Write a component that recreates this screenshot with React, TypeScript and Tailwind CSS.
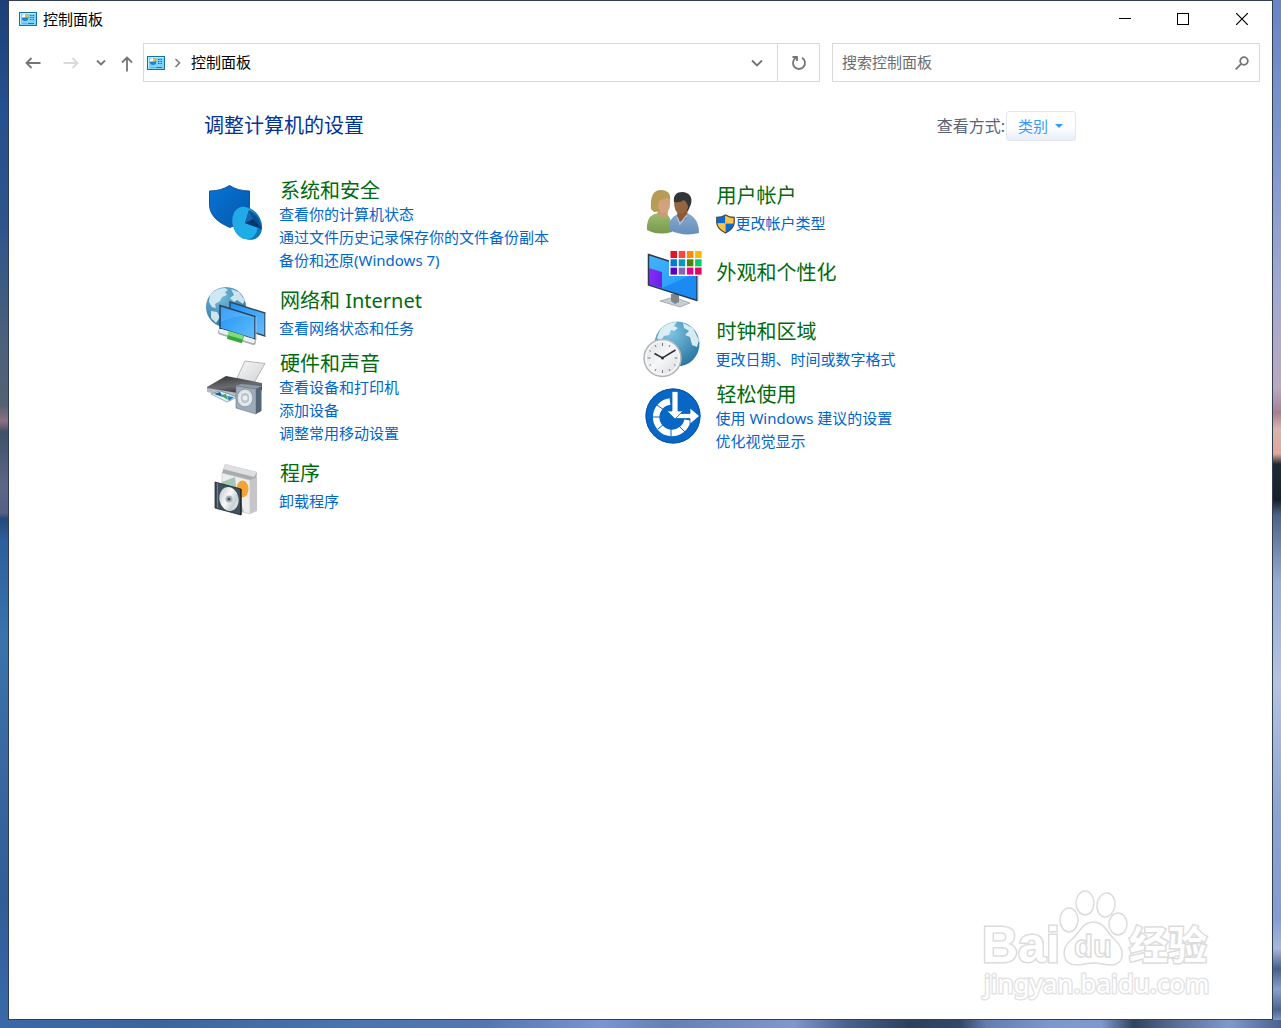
import React from 'react';

type Category = {
    title: string;
    links: string[];
    icon: React.ReactNode;
    shield?: boolean;
};

const ControlPanelIcon = () => (
    <svg className="shrink-0" width="18" height="14" viewBox="0 0 18 14" aria-hidden="true">
        <rect x="0.5" y="0.5" width="17" height="13" fill="#7fd2fa" stroke="#1272a8" />
        <path d="M1.5 12.5V1.5H16.5" fill="none" stroke="#c5ecfd" />
        <circle cx="6" cy="5.5" r="3.4" fill="#1b86cf" />
        <path d="M6 5.5H2.6A3.4 3.4 0 0 1 6 2.1Z" fill="#fff" />
        <path d="M6 5.5V2A3.5 3.5 0 0 1 9.5 5.5Z" fill="#ffb52e" />
        <path d="M11 3.5h1.5M11 5.5h1.5M11 7.5h1.5M13.5 3.5H15M13.5 5.5H15M13.5 7.5H15" stroke="#146fae" />
        <path d="M3 11.5h5" stroke="#f0951c" />
        <path d="M9 11.5h6" stroke="#1579c4" />
    </svg>
);

const UacShield = () => (
    <svg className="shrink-0" width="19" height="20" viewBox="0 0 19 20" aria-hidden="true">
        <clipPath id="uac">
            <path d="M0.8 3.5Q6 3.5 9.5 1Q13 3.5 18.2 3.5V9Q17.5 15 9.5 19Q1.5 15 0.8 9Z" />
        </clipPath>
        <g clipPath="url(#uac)">
            <rect width="9.5" height="9.5" fill="#0b6bd0" />
            <rect x="9.5" width="9.5" height="9.5" fill="#ffc444" />
            <rect y="9.5" width="9.5" height="11" fill="#ffc444" />
            <rect x="9.5" y="9.5" width="9.5" height="11" fill="#0b6bd0" />
        </g>
        <path d="M0.8 3.5Q6 3.5 9.5 1Q13 3.5 18.2 3.5V9Q17.5 15 9.5 19Q1.5 15 0.8 9Z" fill="none" stroke="#4a4a48" strokeWidth="1.3" />
    </svg>
);

const CategoryIcon = ({ children }: { children: React.ReactNode }) => (
    <svg className="-mb-3 h-[66px] w-16 shrink-0" viewBox="0 0 64 66" aria-hidden="true">
        {children}
    </svg>
);

const SecurityIcon = () => (
    <CategoryIcon>
        <defs>
            <linearGradient id="shieldFill" x1="0" y1="0" x2="1" y2="1">
                <stop offset="0" stopColor="#0873d4" />
                <stop offset="1" stopColor="#0458ae" />
            </linearGradient>
            <linearGradient id="pieFill" x1="0" y1="0" x2="1" y2="1">
                <stop offset="0" stopColor="#22a7e4" />
                <stop offset="1" stopColor="#1cb0ea" />
            </linearGradient>
        </defs>
        <path d="M6.5 14Q18 14 26.5 8.5Q35 14 46.5 14V29C46.5 39 38 46 27 50.5C14 45 6.5 38 6.5 27Z" fill="url(#shieldFill)" stroke="#0a57a3" />
        <path d="M36 30C46 27 59 37 59 50C59 60 51 65 43 62L34 57Z" fill="#0b78ba" />
        <ellipse cx="42" cy="46" rx="12.5" ry="16.5" transform="rotate(-14 42 46)" fill="url(#pieFill)" />
        <path d="M42 46L46 33Q56 38 59 52Z" fill="#0a4d91" />
        <path d="M42 46L50 42L59 52Z" fill="#06376f" />
        <path d="M42 46L46 33L50 42Z" fill="#1565ae" />
    </CategoryIcon>
);

const NetworkIcon = () => (
    <CategoryIcon>
        <defs>
            <radialGradient id="netGlobe" cx="0.35" cy="0.25" r="0.8">
                <stop offset="0" stopColor="#79bde0" />
                <stop offset="1" stopColor="#256f9f" />
            </radialGradient>
            <linearGradient id="netScreen" x1="0" y1="0" x2="1" y2="1">
                <stop offset="0" stopColor="#1c92f4" />
                <stop offset="1" stopColor="#63bdff" />
            </linearGradient>
        </defs>
        <circle cx="23" cy="25" r="20" fill="url(#netGlobe)" />
        <path d="M7 13Q13 6 22 6L25 8L22 10L24 13L19 15L17 19L12 22L13 26L9 25L6 20ZM28 7L36 10L42 18L40 22L34 18L31 20L27 16L31 13ZM8 29L14 30L17 35L13 41L8 36Z" fill="#d9edf5" opacity="0.9" />
        <path d="M27 20L62 31V54L27 43Z" fill="url(#netScreen)" stroke="#36495a" strokeWidth="1.5" />
        <path d="M62.5 31.5V54.5" stroke="#b7c4cc" />
        <path d="M17 23.5L52 34.5V57.5L17 46.5Z" fill="url(#netScreen)" stroke="#29435a" strokeWidth="1.5" />
        <path d="M18 40Q35 31 51 36L51 35L18 25Z" fill="#fff" opacity="0.12" />
        <path d="M53 35V58" stroke="#b7c4cc" />
        <path d="M18 50L50 60" stroke="#a9b3b3" strokeWidth="6" strokeLinecap="round" />
        <path d="M18 49L50 59" stroke="#edf0f0" strokeWidth="4" strokeLinecap="round" />
        <path d="M25 53L40 57.5" stroke="#35a83c" strokeWidth="8" />
        <path d="M25 51L40 55.5" stroke="#7ddd79" strokeWidth="4" />
    </CategoryIcon>
);

const HardwareIcon = () => (
    <CategoryIcon>
        <defs>
            <linearGradient id="printer" x1="0" y1="0" x2="0.3" y2="1">
                <stop offset="0" stopColor="#303235" />
                <stop offset="0.6" stopColor="#6a6c70" />
                <stop offset="1" stopColor="#2b2d30" />
            </linearGradient>
            <linearGradient id="paper" x1="0" y1="0" x2="1" y2="1">
                <stop offset="0" stopColor="#f7f7f7" />
                <stop offset="1" stopColor="#cfd1d3" />
            </linearGradient>
        </defs>
        <path d="M42 11L62 13.5L51 33L34 28Z" fill="url(#paper)" stroke="#b4b6b8" />
        <path d="M23 26L59 33V40L35 46L4 40V37Z" fill="url(#printer)" />
        <path d="M4 38L35 43V49L4 42Z" fill="#b7bbc0" />
        <path d="M8 44L17 41L34 47L24 52Z" fill="#e7f3fb" stroke="#5b7b94" strokeWidth="0.6" />
        <path d="M11 44L17 42L20 47Z" fill="#155aa6" />
        <path d="M17 45L23 44L25 50Z" fill="#48a463" />
        <path d="M24 46L31 47L26 51Z" fill="#2781c8" />
        <path d="M33 36L38 34L59 36L53 39Z" fill="#8b98a5" />
        <path d="M33 36L53 39V64L33 58Z" fill="#9eacba" stroke="#73818f" strokeWidth="0.7" />
        <path d="M53 39L58.5 37V61L53 64Z" fill="#536576" />
        <ellipse cx="42" cy="48" rx="8" ry="9" fill="#dce2e6" stroke="#8d9aa7" />
        <ellipse cx="42" cy="48" rx="5" ry="6" fill="#bcc5cd" stroke="#f8fafb" />
        <circle cx="42" cy="48" r="2.5" fill="#ecf0f2" />
    </CategoryIcon>
);

const ProgramsIcon = () => (
    <CategoryIcon>
        <defs>
            <linearGradient id="disc" x1="0" y1="0" x2="1" y2="1">
                <stop offset="0" stopColor="#b6bfc3" />
                <stop offset="0.45" stopColor="#fafafa" />
                <stop offset="0.7" stopColor="#c8d2d5" />
                <stop offset="1" stopColor="#f5f5f5" />
            </linearGradient>
        </defs>
        <path d="M19 18L22 9L54 17L53 26L47 28Z" fill="#a9abad" />
        <path d="M22 9L54 17L51 22L20 14Z" fill="#dedfe0" />
        <path d="M19 18L47 25V59L19 51Z" fill="#ededed" stroke="#c3c3c3" strokeWidth="0.6" />
        <path d="M47 25L54 22V56L47 59Z" fill="#c5c6c7" />
        <path d="M19 27L32 22L33 32L41 57L37 58L19 40Z" fill="#a4c8b3" />
        <ellipse cx="39.5" cy="34" rx="6" ry="8.5" fill="#f5a332" />
        <path d="M12 27L38 34V60L12 53Z" fill="#40505d" stroke="#1b242c" strokeWidth="0.8" />
        <path d="M14.5 28V53" stroke="#71808c" />
        <ellipse cx="26" cy="44" rx="9.5" ry="12" fill="url(#disc)" transform="rotate(-12 26 44)" />
        <circle cx="26" cy="44" r="3.5" fill="#aab3b7" />
        <circle cx="26" cy="44" r="1.5" fill="#3d5363" />
        <path d="M38 34V60" stroke="#15191c" />
    </CategoryIcon>
);

const UsersIcon = () => (
    <CategoryIcon>
        <defs>
            <linearGradient id="womanTop" x1="0" y1="0" x2="0" y2="1">
                <stop offset="0" stopColor="#a2bd71" />
                <stop offset="1" stopColor="#75994c" />
            </linearGradient>
            <linearGradient id="manTop" x1="0" y1="0" x2="0" y2="1">
                <stop offset="0" stopColor="#87abd0" />
                <stop offset="1" stopColor="#668eba" />
            </linearGradient>
        </defs>
        <path d="M7 53Q6 41 14 37L23 35Q32 37 32 55Q18 59 7 53Z" fill="url(#womanTop)" />
        <path d="M18 34H28L27 40Q22 41 17 37Z" fill="#c89b77" />
        <path d="M11 32C10 20 13 13 21 13C29 13 31 18 30 24L24 34L14 35Z" fill="#b59c57" />
        <path d="M19 24Q26 20 30 22Q31 33 26 36Q19 37 18 29Z" fill="#d3a27d" />
        <path d="M29 53Q28 42 36 38L47 36Q59 41 59 56Q44 60 29 53Z" fill="url(#manTop)" />
        <path d="M38 33H48L46 42L39 45L37 38Z" fill="#8b5a35" />
        <path d="M34 25C33 18 37 15 42 15C49 15 53 20 51 27L48 34L42 30Z" fill="#343536" />
        <path d="M34 25Q40 26 44 23Q48 26 48 31Q45 37 39 37Q34 34 34 25Z" fill="#946542" />
        <path d="M37 40L40 47L47 38" fill="none" stroke="#a5c1de" strokeWidth="1.5" />
    </CategoryIcon>
);

const swatches = [
    ['#e81123', '#ff4343', '#ff8c00', '#ffb900'],
    ['#0078d7', '#0099bc', '#498205', '#00cc6a'],
    ['#5b00c6', '#8764b8', '#e3008c', '#ea005e'],
];

const PersonalizeIcon = () => (
    <CategoryIcon>
        <defs>
            <linearGradient id="monitor" x1="0" y1="0" x2="1" y2="1">
                <stop offset="0" stopColor="#46b2fa" />
                <stop offset="1" stopColor="#1798f7" />
            </linearGradient>
            <linearGradient id="wave" x1="0" y1="0" x2="1" y2="0.3">
                <stop offset="0" stopColor="#8a2cff" />
                <stop offset="1" stopColor="#6a22ea" />
            </linearGradient>
        </defs>
        <g transform="translate(0 1)">
            <path d="M20 55L34 51L50 57L40 61Z" fill="#c7cdd1" stroke="#8f989f" strokeWidth="0.7" />
            <path d="M31 48H39V56L35 58L31 55Z" fill="#7c868e" />
            <path d="M8.5 8.5L57 24V54.5L8.5 39Z" fill="url(#monitor)" />
            <path d="M22 42L56 27V54Z" fill="#1b8af3" />
            <path d="M9 22L22 26V42L9 38.5Z" fill="url(#wave)" />
            <path d="M8.5 8.5L57 24V54.5L8.5 39Z" fill="none" stroke="#293b4b" strokeWidth="1.5" />
            <path d="M58 24V55" stroke="#b8c3ca" />
            <rect x="29" y="4" width="34" height="26" fill="#fff" />
            {swatches.map((row, y) =>
                row.map((color, x) => (
                    <rect key={color} x={30.5 + x * 8.2} y={5 + y * 8.3} width="6.5" height="7" fill={color} />
                ))
            )}
        </g>
    </CategoryIcon>
);

const ClockIcon = () => (
    <CategoryIcon>
        <defs>
            <radialGradient id="clockGlobe" cx="0.35" cy="0.25" r="0.8">
                <stop offset="0" stopColor="#7fc6e5" />
                <stop offset="1" stopColor="#28759f" />
            </radialGradient>
            <linearGradient id="clockFace" x1="0" y1="0" x2="1" y2="1">
                <stop offset="0" stopColor="#d9dce0" />
                <stop offset="0.5" stopColor="#f7f7f8" />
                <stop offset="1" stopColor="#d5d6d9" />
            </linearGradient>
        </defs>
        <g transform="translate(0 -1)">
            <circle cx="37" cy="32" r="22.5" fill="url(#clockGlobe)" />
            <path d="M20 18Q27 10 37 10L34 14L38 16L34 19L31 18L29 23L24 24L21 29L17 26ZM43 11L53 16L59 28L57 35L52 33L50 25L45 23L49 19L44 16Z" fill="#e4f2f7" opacity="0.92" />
            <circle cx="22.5" cy="46" r="18.5" fill="url(#clockFace)" stroke="#b2b5ba" strokeWidth="1.5" />
            <circle cx="22.5" cy="46" r="16.5" fill="none" stroke="#f7f7f7" strokeWidth="1.5" />
            <path d="M22.5 31V34M22.5 58V61M7.5 46H10.5M34.5 46H37.5M15 33L16 35M30 33L29 35M9.5 38.5L11 39.5M9.5 53.5L11 52.5M15 59L16 57M30 59L29 57M35.5 53.5L34 52.5" stroke="#777c82" />
            <path d="M14.5 41.5L22.5 46L35.5 38" fill="none" stroke="#2b3035" strokeWidth="1.5" />
            <circle cx="22.5" cy="46" r="1.5" fill="#2b3035" />
        </g>
    </CategoryIcon>
);

const EaseIcon = () => (
    <CategoryIcon>
        <g transform="translate(0 -4)">
            <circle cx="33" cy="39" r="27.5" fill="#0867c4" />
            <circle cx="33" cy="39" r="27" fill="none" stroke="#0654a6" />
            <path d="M30 24.5A15.8 15.8 0 1 0 47.5 43" fill="none" stroke="#fff" strokeWidth="6.5" />
            <path d="M12 40H20M17 28L24 33M18 52L24 47M31 60V52M45 55L39 49" stroke="#0867c4" strokeWidth="1" />
            <path d="M34.5 36.5H50V31L59.5 39L50 47V41.5H34.5Z" fill="#fff" stroke="#0867c4" strokeWidth="0.8" />
            <path d="M32 14.5H38V34H43L35 42L27 34H32Z" fill="#fff" stroke="#0867c4" strokeWidth="0.8" />
        </g>
    </CategoryIcon>
);

const leftCategories: Category[] = [
    {
        title: '系统和安全',
        links: ['查看你的计算机状态', '通过文件历史记录保存你的文件备份副本', '备份和还原(Windows 7)'],
        icon: <SecurityIcon />,
    },
    { title: '网络和 Internet', links: ['查看网络状态和任务'], icon: <NetworkIcon /> },
    {
        title: '硬件和声音',
        links: ['查看设备和打印机', '添加设备', '调整常用移动设置'],
        icon: <HardwareIcon />,
    },
    { title: '程序', links: ['卸载程序'], icon: <ProgramsIcon /> },
];

const rightCategories: Category[] = [
    { title: '用户帐户', links: ['更改帐户类型'], icon: <UsersIcon />, shield: true },
    { title: '外观和个性化', links: [], icon: <PersonalizeIcon /> },
    { title: '时钟和区域', links: ['更改日期、时间或数字格式'], icon: <ClockIcon /> },
    { title: '轻松使用', links: ['使用 Windows 建议的设置', '优化视觉显示'], icon: <EaseIcon /> },
];

const CategoryItem = ({ category }: { category: Category }) => {
    const { title, links, icon, shield } = category;
    const single = links.length === 1;

    return (
        <section className="flex gap-3">
            {icon}
            <div className={links.length === 0 ? 'pt-3.5 pb-[18px]' : single ? 'pt-[5px]' : ''}>
                <h2 className="pt-0.5 pl-px text-[20px] leading-[24px] text-[#006b0d]">
                    <a href="#" className="hover:underline">{title}</a>
                </h2>
                <ul className={single ? 'mt-1' : ''}>
                    {links.map((link) => (
                        <li key={link} className="text-[15px] leading-[23px] text-[#0066cc]">
                            <a href="#" className="flex items-center gap-px hover:underline">
                                {shield && <UacShield />}
                                {link}
                            </a>
                        </li>
                    ))}
                </ul>
            </div>
        </section>
    );
};

const TitleBar = () => (
    <header className="flex h-9 items-center pl-2.5">
        <ControlPanelIcon />
        <h1 className="ml-1.5 flex-1 text-[15px] text-black">控制面板</h1>
        <button aria-label="最小化" className="flex h-full w-[58px] items-center justify-center">
            <svg width="12" height="12" viewBox="0 0 12 12"><path d="M0 5.5H12" stroke="#000" /></svg>
        </button>
        <button aria-label="最大化" className="flex h-full w-[58px] items-center justify-center">
            <svg width="12" height="12" viewBox="0 0 12 12"><rect x="0.5" y="0.5" width="11" height="11" fill="none" stroke="#000" /></svg>
        </button>
        <button aria-label="关闭" className="flex h-full w-[60px] items-center justify-center">
            <svg width="12" height="12" viewBox="0 0 12 12"><path d="M0 0L12 12M12 0L0 12" stroke="#000" strokeWidth="1.2" /></svg>
        </button>
    </header>
);

const Toolbar = () => (
    <div className="mt-1.5 flex h-[39px] pr-3 pl-3">
        <button aria-label="后退" className="flex w-6 items-center justify-center">
            <svg width="16" height="12" viewBox="0 0 16 12" fill="none" stroke="#757575" strokeWidth="1.8"><path d="M15.5 6H1.5M6.5 1L1.5 6L6.5 11" /></svg>
        </button>
        <button aria-label="前进" disabled className="ml-3.5 flex w-6 items-center justify-center">
            <svg width="16" height="12" viewBox="0 0 16 12" fill="none" stroke="#dadada" strokeWidth="1.8"><path d="M0.5 6H14.5M9.5 1L14.5 6L9.5 11" /></svg>
        </button>
        <button aria-label="最近浏览的位置" className="ml-2.5 flex w-4 items-center justify-center">
            <svg width="10" height="6" viewBox="0 0 10 6" fill="none" stroke="#757575" strokeWidth="1.8"><path d="M1 0.5L5 4.5L9 0.5" /></svg>
        </button>
        <button aria-label="上移" className="ml-1.5 flex w-6 items-center justify-center pt-0.5">
            <svg width="12" height="16" viewBox="0 0 12 16" fill="none" stroke="#757575" strokeWidth="1.8"><path d="M6 15.5V1.5M1 6.5L6 1.5L11 6.5" /></svg>
        </button>

        <nav aria-label="地址" className="ml-1 flex min-w-0 flex-1 items-center border border-[#d9d9d9] pl-[3px]">
            <ControlPanelIcon />
            <svg className="ml-2.5" width="6" height="10" viewBox="0 0 6 10" fill="none" stroke="#757575" strokeWidth="1.5"><path d="M0.5 1L4.5 5L0.5 9" /></svg>
            <a href="#" className="ml-2.5 flex-1 text-[15px] text-black">控制面板</a>
            <button aria-label="以前的位置" className="flex h-full w-10 items-center justify-center">
                <svg width="12" height="8" viewBox="0 0 12 8" fill="none" stroke="#757575" strokeWidth="1.8"><path d="M1 1.5L6 6.5L11 1.5" /></svg>
            </button>
            <button aria-label="刷新" className="flex h-full w-[42px] items-center justify-center border-l border-[#d9d9d9]">
                <svg width="16" height="16" viewBox="0 0 16 16" fill="none" stroke="#757575" strokeWidth="1.8"><path d="M11 2.8A6 6 0 1 1 5 2.8M1.5 2H6V6" /></svg>
            </button>
        </nav>

        <label className="ml-3 flex w-[428px] items-center border border-[#d9d9d9] pr-2.5 pl-[9px]">
            <input
                type="search"
                aria-label="搜索控制面板"
                placeholder="搜索控制面板"
                className="min-w-0 flex-1 text-[15px] text-black outline-none placeholder:text-[#6d6d6d]"
            />
            <svg width="14" height="14" viewBox="0 0 14 14" fill="none" stroke="#757575" strokeWidth="1.8"><circle cx="9" cy="5" r="3.8" /><path d="M6.2 7.8L0.7 13.3" /></svg>
        </label>
    </div>
);

const Watermark = () => (
    <svg
        className="pointer-events-none absolute right-[58px] bottom-2 h-[130px] w-[236px]"
        viewBox="0 0 236 130"
        fill="#fff"
        stroke="#dcdcdc"
        strokeWidth="1.5"
        aria-hidden="true"
    >
        <g fontFamily="Liberation Sans, Arial, sans-serif" fontWeight="700" strokeWidth="3" paintOrder="stroke">
            <text x="4" y="81" fontSize="50">Bai</text>
            <text x="151" y="78" fontSize="39" fontFamily="Noto Sans CJK SC, sans-serif">经验</text>
        </g>
        <ellipse cx="91" cy="39" rx="9" ry="12" />
        <ellipse cx="107" cy="22" rx="9" ry="12" />
        <ellipse cx="128" cy="24" rx="9" ry="12" transform="rotate(8 128 24)" />
        <ellipse cx="140" cy="43" rx="9" ry="11" />
        <path d="M115 41C127 41 129 52 137 59C148 69 146 84 133 84C126 84 123 82 116 82C109 82 105 84 99 84C83 84 83 67 93 59C102 52 104 41 115 41Z" />
        <text x="96" y="76" fontSize="31" fontWeight="700" fontFamily="Liberation Sans, Arial, sans-serif">du</text>
        <text x="6" y="112" fontSize="26" strokeWidth="3" stroke="#e4e4e4" paintOrder="stroke" fontFamily="Noto Sans, sans-serif">jingyan.baidu.com</text>
    </svg>
);

export default function App() {
    return (
        <div className="flex min-h-screen flex-col font-['Noto_Sans','Noto_Sans_CJK_SC',sans-serif]">
            <div className="flex flex-1">
                <div className="w-2 bg-[linear-gradient(#1c3f77_0%,#25508e_20%,#2f548c_42%,#4c617b_64%,#556072_75%,#8d6f82_78%,#405068_80%,#5d6687_90%,#566083_95%,#24497a_96%,#2c5f9c_100%)] bg-[length:100%_540px] bg-no-repeat">
                    <div className="mt-[540px] h-[calc(100%-540px)] bg-[linear-gradient(#2c5f9c,#3973ab_20%,#3a68a2_45%,#2f5d97_75%,#3a69a8)]" />
                </div>
                <main className="relative flex-1 border border-[#303d52] bg-white">
                    <TitleBar />
                    <Toolbar />
                    <div className="mx-auto w-full max-w-[875px] pt-[29px] pr-0.5">
                        <div className="flex h-[30px] items-center justify-between">
                            <h2 className="pl-px text-[20px] text-[#003399]">调整计算机的设置</h2>
                            <div className="flex items-center">
                                <label htmlFor="view" className="mr-px text-[16px] text-[#5a6478]">查看方式:</label>
                                <div className="relative">
                                    <select
                                        id="view"
                                        defaultValue="类别"
                                        className="h-[30px] w-[70px] appearance-none rounded-[3px] border border-[#e2e6ef] bg-linear-to-b from-white from-50% to-[#e8eef9] to-100% pl-[11px] text-[15px] text-[#3399ff]"
                                    >
                                        <option>类别</option>
                                        <option>大图标</option>
                                        <option>小图标</option>
                                    </select>
                                    <svg className="pointer-events-none absolute top-[13px] right-[13px]" width="8" height="4" viewBox="0 0 8 4" fill="#3399ff"><path d="M0 0H8L4 4Z" /></svg>
                                </div>
                            </div>
                        </div>
                        <div className="mt-9 grid grid-cols-2">
                            <div className="flex flex-col gap-2.5">
                                {leftCategories.map((category) => (
                                    <CategoryItem key={category.title} category={category} />
                                ))}
                            </div>
                            <div className="flex flex-col gap-2.5">
                                {rightCategories.map((category) => (
                                    <CategoryItem key={category.title} category={category} />
                                ))}
                            </div>
                        </div>
                    </div>
                    <Watermark />
                </main>
                <div className="w-2 bg-[linear-gradient(#6886c4_0%,#7f97cf_15%,#a3aace_29%,#b9a9bf_38%,#a5808f_40.5%,#d9b4ac_42%,#e0a89a_44.5%,#202a35_45.5%,#172029_49%,#4d6385_50.5%,#96abd0_57%,#b6c3df_67%,#8ba3cf_80%,#839dd0_90%,#a9b6db_93%,#46608c_95%,#8aa0cc_97%,#4b638f_99%,#7d95c8_100%)]" />
            </div>
            <div className="h-2 bg-[linear-gradient(90deg,#3a69a8_0%,#3c659c_12%,#4a73ae_26%,#5577b0_38%,#7a95d2_47%,#6580b5_52%,#8196cc_62%,#4a6390_66%,#2c405e_71%,#34496a_75%,#647eb0_77%,#7d97cf_82%,#7f99d0_86%,#30445f_88.5%,#5b7199_92%,#8099cd_96%,#4a628e_100%)]" />
        </div>
    );
}
